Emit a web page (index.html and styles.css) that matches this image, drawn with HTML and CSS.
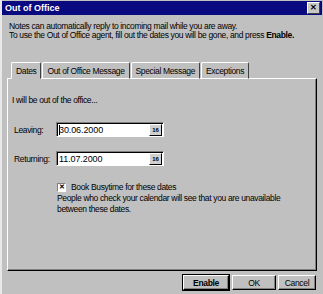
FILE: index.html
```html
<!DOCTYPE html>
<html lang="en">
<head>
    <meta charset="utf-8">
    <title>Out of Office</title>
    <link rel="stylesheet" href="styles.css">
</head>
<body>

<div class="window">
    <div class="titlebar">
        <span class="title">Out of Office</span>
        <span class="close">&#x2715;</span>
    </div>

    <div class="intro">
        <p>Notes can automatically reply to incoming mail while you are away.</p>
        <p>To use the Out of Office agent, fill out the dates you will be gone, and press <b>Enable.</b></p>
    </div>

    <ul class="tabs">
        <li class="tab active">Dates</li>
        <li class="tab">Out of Office Message</li>
        <li class="tab">Special Message</li>
        <li class="tab">Exceptions</li>
    </ul>

    <div class="panel">
        <p class="lead">I will be out of the office...</p>

        <div class="field">
            <label>Leaving:</label>
            <div class="date">
                <span class="value"><i class="caret"></i>30.06.2000</span>
                <span class="cal">16</span>
            </div>
        </div>

        <div class="field">
            <label>Returning:</label>
            <div class="date">
                <span class="value">11.07.2000</span>
                <span class="cal">16</span>
            </div>
        </div>

        <div class="check">
            <span class="box">&#x2715;</span>
            <span>Book Busytime for these dates</span>
        </div>

        <p class="note">People who check your calendar will see that you are unavailable<br>between these dates.</p>
    </div>

    <div class="buttons">
        <span class="btn btn-enable">Enable</span>
        <span class="btn btn-ok">OK</span>
        <span class="btn btn-cancel">Cancel</span>
    </div>
</div>

</body>
</html>
```

FILE: styles.css
```css
body {
    margin: 0;
    padding: 0;
    background: #c0c0c0;
    font: normal 8.5px/10px "Liberation Sans", Arial, sans-serif;
    letter-spacing: -0.35px;
    color: #000;
}

p {
    margin: 0;
}

.window {
    width: 323px;
    height: 294px;
    box-sizing: border-box;
    border-left: 2px solid #e8e8e8;
    background: #c0c0c0;
    overflow: hidden;
}

/* title bar */
.titlebar {
    display: flex;
    align-items: center;
    justify-content: space-between;
    height: 14px;
    margin: 1px 1px 0 0;
    padding: 0 2px 0 3px;
    background: #0a0a80;
    color: #fff;
    font-weight: bold;
    font-size: 9px;
    letter-spacing: 0;
}

    .titlebar .close {
        display: flex;
        align-items: center;
        justify-content: center;
        width: 11px;
        height: 10px;
        background: #c8c8c8;
        color: #000;
        font-size: 8px;
        font-weight: bold;
        border: 1px solid;
        border-color: #fff #404040 #404040 #fff;
    }

/* intro text */
.intro {
    padding: 7px 0 0 7px;
    height: 40px;
    box-sizing: border-box;
}

    .intro p {
        line-height: 9px;
    }

/* tabs */
.tabs {
    list-style: none;
    display: flex;
    margin: 7px 0 0 9px;
    padding: 0;
    height: 17px;
}

    .tabs .tab {
        display: flex;
        align-items: center;
        padding: 0 4px;
        border: 1px solid;
        border-color: #fff #404040 #fff #fff;
        border-radius: 2px 2px 0 0;
        margin-right: 1px;
    }

    .tabs .tab.active {
        border-bottom-color: #c0c0c0;
        position: relative;
        z-index: 1;
    }

/* panel */
.panel {
    margin: -1px 6px 0 5px;
    height: 193px;
    box-sizing: border-box;
    border: 1px solid;
    border-color: #fff #000 #000 #fff;
    box-shadow: inset -1px -1px 0 #808080;
    padding: 16px 0 0 4px;
}

    .panel .lead {
        height: 10px;
    }

.field {
    display: flex;
    align-items: center;
    margin-top: 17px;
}

    .field + .field {
        margin-top: 14px;
    }

    .field label {
        width: 42px;
        padding-left: 2px;
    }

.date {
    display: flex;
    align-items: center;
    justify-content: space-between;
    width: 108px;
    height: 15px;
    box-sizing: border-box;
    background: #fff;
    border: 1px solid;
    border-color: #808080 #fff #fff #808080;
    box-shadow: inset 1px 1px 0 #000;
    padding: 1px 1px 0 2px;
    font-size: 9px;
    letter-spacing: -0.1px;
}

    .date .value {
        display: flex;
        align-items: center;
    }

    .date .caret {
        display: inline-block;
        width: 1px;
        height: 10px;
        background: #000;
        margin-right: -1px;
    }

    .date .cal {
        display: flex;
        align-items: center;
        justify-content: center;
        width: 13px;
        height: 12px;
        box-sizing: border-box;
        background: #d0d0d0;
        border: 1px solid;
        border-color: #fff #000 #000 #fff;
        font-size: 6px;
        font-weight: bold;
        letter-spacing: 0;
    }

.check {
    display: flex;
    align-items: center;
    margin: 16px 0 0 45px;
    height: 10px;
}

    .check .box {
        display: flex;
        align-items: center;
        justify-content: center;
        width: 9px;
        height: 9px;
        box-sizing: border-box;
        border: 1px solid;
        border-color: #808080 #fff #fff #808080;
        background: #fff;
        font-size: 7px;
        font-weight: bold;
        margin-right: 5px;
    }

.note {
    margin: 1px 0 0 45px;
    line-height: 11px;
}

/* buttons */
.buttons {
    display: flex;
    justify-content: flex-end;
    gap: 2px;
    margin: 4px 7px 0 0;
}

    .buttons .btn {
        display: flex;
        align-items: center;
        justify-content: center;
        height: 15px;
        box-sizing: border-box;
        border: 1px solid;
        border-color: #fff #000 #000 #fff;
        box-shadow: inset -1px -1px 0 #808080;
    }

    .buttons .btn-enable {
        width: 46px;
        font-weight: bold;
        outline: 1px solid #000;
        margin-right: 1px;
    }

    .buttons .btn-ok {
        width: 44px;
    }

    .buttons .btn-cancel {
        width: 38px;
    }
```
